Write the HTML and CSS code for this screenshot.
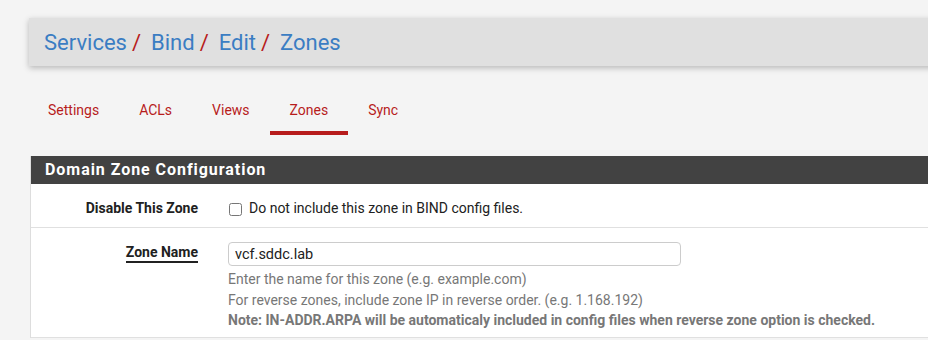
FILE: index.html
```html
<!DOCTYPE html>
<html lang="en">
<head>
  <meta charset="UTF-8" />
  <title>Services / Bind / Edit / Zones</title>
  <link rel="stylesheet" href="styles.css">
</head>
<body>
  <div class="page">
    <div class="header">
      <ol class="breadcrumb">
        <li><a href="#">Services</a></li>
        <li><a href="#">Bind</a></li>
        <li><a href="#">Edit</a></li>
        <li class="last"><a href="#">Zones</a></li>
      </ol>
    </div>

    <ul class="tabs">
      <li><a href="#">Settings</a></li>
      <li><a href="#">ACLs</a></li>
      <li><a href="#">Views</a></li>
      <li class="active"><a href="#">Zones</a></li>
      <li><a href="#">Sync</a></li>
    </ul>

    <div class="panel">
      <div class="panel-heading">Domain Zone Configuration</div>

      <div class="form-row">
        <div class="form-label">Disable This Zone</div>
        <div class="form-field">
          <label class="check">
            <input type="checkbox" />
            Do not include this zone in BIND config files.
          </label>
        </div>
      </div>

      <div class="form-row">
        <div class="form-label"><span class="required">Zone Name</span></div>
        <div class="form-field">
          <input type="text" class="form-control" value="vcf.sddc.lab" />
          <div class="help">
            Enter the name for this zone (e.g. example.com)<br />
            For reverse zones, include zone IP in reverse order. (e.g. 1.168.192)<br />
            <b>Note: IN-ADDR.ARPA will be automaticaly included in config files when reverse zone option is checked.</b>
          </div>
        </div>
      </div>
    </div>
  </div>
</body>
</html>
```

FILE: styles.css
```css
* {
  box-sizing: border-box;
  margin: 0;
  padding: 0;
  font-family: 'Roboto', sans-serif;
}

body {
  background-color: #f4f4f4;
  color: #212121;
  font-size: 14px;
  overflow: hidden;
}

a {
  text-decoration: none;
}

.page {
  width: 1100px;
  margin-left: 29px;
  padding-top: 18px;
}

.header {
  background-color: #e0e0e0;
  height: 48px;
  box-shadow: 0 2px 6px rgba(0, 0, 0, 0.25);
  padding-left: 15px;
  display: flex;
  align-items: center;
}

.breadcrumb {
  list-style: none;
  display: flex;
  font-size: 22px;
}

.breadcrumb a {
  color: #3b7dc3;
}

.breadcrumb li::after {
  content: "/";
  color: #b71c1c;
  margin-left: 5px;
  margin-right: 10px;
}

.breadcrumb li.last::after {
  content: none;
}

.tabs {
  list-style: none;
  display: flex;
  margin-top: 26px;
  margin-left: -1px;
  height: 64px;
}

.tabs li {
  padding: 0 20px 4px;
  height: 43px;
  display: flex;
  align-items: center;
  border-bottom: 4px solid transparent;
}

.tabs a {
  color: #b71c1c;
  font-size: 14px;
}

.tabs li.active {
  border-bottom-color: #b71c1c;
}

.panel {
  background-color: #fff;
  border-left: 1px solid #ddd;
  margin-left: 1px;
}

.panel-heading {
  background-color: #424242;
  color: #fff;
  font-weight: bold;
  font-size: 16px;
  letter-spacing: 0.95px;
  height: 28px;
  line-height: 28px;
  padding-left: 14px;
}

.form-row {
  display: flex;
  border-bottom: 1px solid #e0e0e0;
}

.form-label {
  width: 183px;
  text-align: right;
  font-weight: bold;
  padding: 14px 16px 9px 0;
  line-height: 20px;
  flex-shrink: 0;
}

.form-label .required {
  border-bottom: 2px solid #212121;
  padding-bottom: 1px;
}

.form-field {
  padding: 14px 0 6px 14px;
  flex: 1;
}

.check {
  display: flex;
  align-items: center;
  gap: 7px;
  height: 20px;
  margin-bottom: 3px;
}

.check input {
  width: 13px;
  height: 13px;
  margin-top: 2px;
  margin-left: 1px;
}

.form-control {
  width: 453px;
  height: 24px;
  border: 1px solid #ccc;
  border-radius: 4px;
  padding: 0 6px;
  font-size: 14.5px;
  color: #212121;
  margin-bottom: 3px;
}

.help {
  color: #777;
  line-height: 20.5px;
}

.help b {
  font-weight: bold;
}
```
